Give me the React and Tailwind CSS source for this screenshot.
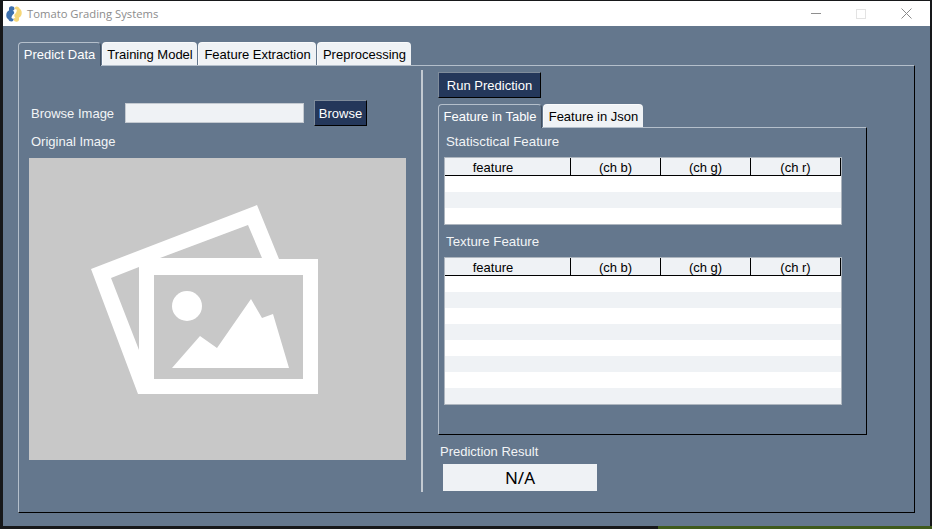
function Tab({ label, active, width }) {
  return (
    <div
      className={
        active
          ? "h-[24px] -mb-px z-10 flex items-center justify-center rounded-t-[4px] border-l border-t border-r border-[#b4bfcb] border-r-[#3f4d5e] bg-[#64778d] text-white"
          : "h-[23px] flex items-center justify-center rounded-t-[4px] border-l border-t border-white/60 bg-[#eff2f5] text-black"
      }
      style={{ width }}
    >
      {label}
    </div>
  );
}

function GridTable({ rows }) {
  const cols = [
    { label: "feature", w: "w-[126px]", pr: "pr-[29px]" },
    { label: "(ch b)", w: "w-[90px]", pr: "" },
    { label: "(ch g)", w: "w-[90px]", pr: "" },
    { label: "(ch r)", w: "w-[90px]", pr: "" },
  ];
  return (
    <div className="w-[398px] border border-[#aeb6bf] bg-white">
      <div className="flex h-[18px] bg-[#eff2f5] text-black">
        {cols.map((c) => (
          <div
            key={c.label}
            className={`${c.w} ${c.pr} flex items-center justify-center border-b border-r border-black text-[13px] leading-none pt-px`}
          >
            {c.label}
          </div>
        ))}
      </div>
      {Array.from({ length: rows }).map((_, i) => (
        <div key={i} className={i % 2 ? "h-[16px] bg-[#eff2f5]" : "h-[16px] bg-white"} />
      ))}
    </div>
  );
}

function BlueButton({ children, className }) {
  return (
    <div
      className={`flex h-[26px] items-center justify-center border border-b-black border-r-black border-l-[#7f8c9b] border-t-[#7f8c9b] bg-[#24375a] text-white ${className}`}
    >
      {children}
    </div>
  );
}

function PhotoIcon() {
  return (
    <svg viewBox="0 0 250 210" className="h-[210px] w-[250px]">
      <path
        fill="#fff"
        fillRule="evenodd"
        d="M11 74 L177 10 L199 64 L238 64 L238 199 L58 199 Z M31 83 L59 155 L59 72 Z M80 63 L182 63 L168 30 Z"
      />
      <path fill="#c8c8c8" d="M74 80 H223 V184 H74 Z" />
      <circle cx="107" cy="111" r="15" fill="#fff" />
      <path fill="#fff" d="M92 173 L120 141 L137 153 L171 104 L182 123 L193 119 L209 173 Z" />
    </svg>
  );
}

function PythonLogo() {
  return (
    <svg viewBox="0 0 16 16" className="h-[16px] w-[16px]">
      <path
        fill="#3d70ae"
        d="M4.500 0.500 C6 0 8.500 0.500 8.500 2.500 C8.500 4 7.500 4.500 6.500 4.500 C7.800 5 8.500 6 8 7.500 C7 8.500 5.500 10 5.500 11.500 C5.500 12.500 6.500 13 7.500 12.500 C8 14 7 15.500 5.500 15.500 C3.500 15.500 3 14.500 2.500 13.500 C0.800 12.500 0 10.500 0.300 8.500 C0.500 6.500 1.500 5 3 4.500 L3 2.500 C3 1.500 3.500 0.800 4.500 0.500 Z"
      />
      <path
        fill="#f6d778"
        d="M11.500 15.500 C10 16 7.800 15.500 7.800 13.500 C7.800 12.500 8.500 11.800 9.500 11.500 C8.500 11 8 10 8.500 8.500 C9.500 7.500 10.800 6 10.800 4.500 C10.800 3.500 9.800 3 8.800 3.500 C8.300 2 9.200 0.500 10.500 0.500 C12.500 0.500 13 1.500 13.500 2.500 C15.200 3.500 16 5.500 15.700 7.500 C15.500 9.500 14.500 11 13 11.500 L13 13.500 C13 14.500 12.500 15.200 11.500 15.500 Z"
      />
    </svg>
  );
}

export default function App() {
  return (
    <div className="flex h-[529px] w-[932px] flex-col overflow-hidden bg-[#17181a] text-[13px] leading-none">
      <div className="h-[526px] shrink-0 pl-[3px] pr-[2px] pt-px">
        <div className="flex h-full flex-col font-['Liberation_Sans',Arial,sans-serif]">
          {/* title bar */}
          <div className="flex h-[25px] shrink-0 items-center bg-white">
            <div className="ml-[3px]">
              <PythonLogo />
            </div>
            <span className="ml-[5px] font-['Open_Sans',sans-serif] text-[11.25px] text-[#8c8c8c]">
              Tomato Grading Systems
            </span>
            <div className="ml-auto flex items-center pr-[18px]">
              <div className="h-px w-[10px] bg-[#8f8f8f]" />
              <div className="ml-[35px] h-[10px] w-[10px] border border-[#e3e3e3]" />
              <svg viewBox="0 0 11 11" className="ml-[35px] h-[11px] w-[11px]" stroke="#8a8a8a" strokeWidth="1">
                <path d="M0.500 0.500 L10.500 10.500 M10.500 0.500 L0.500 10.500" />
              </svg>
            </div>
          </div>

          {/* body */}
          <div className="flex-1 bg-[#64778d] pl-[15px] pr-[14px] pt-[16px]">
            <div className="flex h-[23px] w-full items-end gap-px">
              <Tab label="Predict Data" active width={83} />
              <Tab label="Training Model" width={95} />
              <Tab label="Feature Extraction" width={118} />
              <Tab label="Preprocessing" width={94} />
            </div>

            <div className="flex h-[448px] w-[897px] border border-[#b4bfcb] border-b-black border-r-black">
              {/* left column */}
              <div className="w-[402px] shrink-0 pl-[10px] pt-[34px] text-[#f2f4f6]">
                <div className="flex h-[26px] items-center">
                  <span className="ml-[2px] w-[94px]">Browse Image</span>
                  <div className="h-[20px] w-[179px] border border-[#c4cad1] bg-[#eff2f5]" />
                  <BlueButton className="ml-[10px] w-[53px]">Browse</BlueButton>
                </div>
                <div className="ml-[2px] mt-[9px] h-[14px]">Original Image</div>
                <div className="mt-[9px] h-[302px] w-[377px] bg-[#c8c8c8] pl-[51px] pt-[37px]">
                  <PhotoIcon />
                </div>
              </div>

              {/* right column */}
              <div className="mb-[20px] mt-[4px] w-[2px] shrink-0 bg-[#c3cad2]" />
              <div className="pl-[15px] pt-[6px] text-[#f2f4f6]">
                <BlueButton className="w-[103px]">Run Prediction</BlueButton>
                <div className="mt-[6px] flex h-[23px] items-end gap-px">
                  <Tab label="Feature in Table" active width={104} />
                  <Tab label="Feature in Json" width={100} />
                </div>
                <div className="h-[308px] w-[429px] border border-[#b4bfcb] border-b-black border-r-black pl-[5px] pt-[7px]">
                  <div className="ml-[2px] h-[14px] text-[13.3px]">Statisctical Feature</div>
                  <div className="mt-[8px]">
                    <GridTable rows={3} />
                  </div>
                  <div className="ml-[2px] mt-[10px] h-[14px] text-[13.3px]">Texture Feature</div>
                  <div className="mt-[8px]">
                    <GridTable rows={8} />
                  </div>
                </div>
                <div className="ml-[2px] mt-[10px] h-[14px]">Prediction Result</div>
                <div className="ml-[5px] mt-[5px] flex h-[27px] w-[154px] items-center justify-center bg-[#eff2f5] font-['Noto_Sans',sans-serif] text-[17px] text-black">
                  N/A
                </div>
              </div>
            </div>
          </div>
        </div>
      </div>

      {/* desktop peeking out under the window */}
      <div className="flex h-[3px] shrink-0">
        <div className="w-[658px] bg-[#17181a]" />
        <div className="flex-1 bg-[#3f5a1c]" />
      </div>
    </div>
  );
}
